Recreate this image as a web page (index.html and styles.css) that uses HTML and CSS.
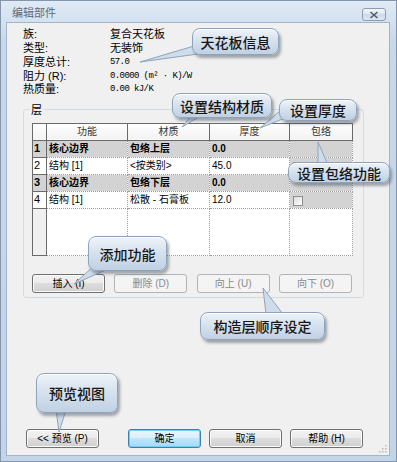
FILE: index.html
```html
<!DOCTYPE html>
<html lang="zh-CN">
<head>
    <meta charset="UTF-8">
    <title>编辑部件</title>
    <link rel="stylesheet" href="styles.css">
</head>
<body>

<div class="window">
    <div class="titlebar">
        <span class="title">编辑部件</span>
        <span class="close">
            <svg width="10" height="8" viewBox="0 0 10 8"><path d="M1.5 1 L8.5 7 M8.5 1 L1.5 7" stroke="#4e5d6f" stroke-width="1.6" fill="none"/></svg>
        </span>
    </div>
    <div class="content">
        <div class="info">
            <span>族:</span><span>复合天花板</span>
            <span>类型:</span><span>无装饰</span>
            <span>厚度总计:</span><span class="num">57.0</span>
            <span>阻力 (R):</span><span class="num">0.0000 (m² · K)/W</span>
            <span>热质量:</span><span class="num">0.00 kJ/K</span>
        </div>

        <fieldset class="layers">
            <legend>层</legend>
            <table class="grid">
                <colgroup>
                    <col class="c-num"><col class="c-fn"><col class="c-mat"><col class="c-thk"><col class="c-wrap">
                </colgroup>
                <tr class="head">
                    <th class="corner"></th><th>功能</th><th>材质</th><th>厚度</th><th>包络</th>
                </tr>
                <tr class="core">
                    <td class="n">1</td><td>核心边界</td><td>包络上层</td><td>0.0</td><td></td>
                </tr>
                <tr>
                    <td class="n">2</td><td>结构 [1]</td><td>&lt;按类别&gt;</td><td>45.0</td><td class="shade"><span class="check"></span></td>
                </tr>
                <tr class="core">
                    <td class="n">3</td><td>核心边界</td><td>包络下层</td><td>0.0</td><td></td>
                </tr>
                <tr>
                    <td class="n">4</td><td>结构 [1]</td><td>松散 - 石膏板</td><td>12.0</td><td class="shade"><span class="check"></span></td>
                </tr>
                <tr class="fill">
                    <td class="n"></td><td></td><td></td><td></td><td></td>
                </tr>
            </table>
            <div class="btn-row">
                <button class="btn">插入 (I)</button>
                <button class="btn" disabled>删除 (D)</button>
                <button class="btn" disabled>向上 (U)</button>
                <button class="btn" disabled>向下 (O)</button>
            </div>
        </fieldset>

        <div class="dialog-buttons">
            <button class="btn preview">&lt;&lt; 预览 (P)</button>
            <button class="btn default">确定</button>
            <button class="btn">取消</button>
            <button class="btn">帮助 (H)</button>
        </div>

        <svg class="grip" width="8" height="8" viewBox="0 0 8 8">
            <rect x="6" y="0" width="1.5" height="1.5" fill="#b3b9c1"/>
            <rect x="3" y="3" width="1.5" height="1.5" fill="#b3b9c1"/>
            <rect x="6" y="3" width="1.5" height="1.5" fill="#b3b9c1"/>
            <rect x="0" y="6" width="1.5" height="1.5" fill="#b3b9c1"/>
            <rect x="3" y="6" width="1.5" height="1.5" fill="#b3b9c1"/>
            <rect x="6" y="6" width="1.5" height="1.5" fill="#b3b9c1"/>
        </svg>
    </div>
</div>

<!-- callout tails, drawn under the bubbles -->
<svg class="tails" width="397" height="462" viewBox="0 0 397 462">
    <g fill="#cfdcea" stroke="#8ea4bd" stroke-width="1">
        <polygon points="194,46 198,54 140,62"/>
        <polygon points="192,115 202,115 182,127"/>
        <polygon points="281,110 285,118 260,128"/>
        <polygon points="318,165 328,165 318,142"/>
        <polygon points="96,264 108,269 74,284"/>
        <polygon points="266,314 283,314 263,288"/>
        <polygon points="56,410 66,410 59,432"/>
    </g>
</svg>

<div class="note ceiling">天花板信息</div>
<div class="note material">设置结构材质</div>
<div class="note thickness">设置厚度</div>
<div class="note wrapping">设置包络功能</div>
<div class="note insert">添加功能</div>
<div class="note order">构造层顺序设定</div>
<div class="note preview-tip">预览视图</div>

</body>
</html>
```

FILE: styles.css
```css
body {
    margin: 0;
    font-family: "Liberation Sans", "Noto Sans CJK SC", sans-serif;
    font-size: 11px;
    color: #000;
}
.window {
    box-sizing: border-box;
    width: 397px;
    height: 462px;
    border: 1px solid #8396ae;
    padding: 0 6px 5px 5px;
    background: linear-gradient(#e0eaf5, #c8d8eb 40px, #c3d4e8);
    display: flex;
    flex-direction: column;
}
.titlebar {
    height: 21px;
    display: flex;
    justify-content: space-between;
}
.title {
    color: #5d6a77;
    font-size: 11px;
    line-height: 14px;
    margin: 5px 0 0 6px;
}
.close {
    box-sizing: border-box;
    width: 24px;
    height: 13px;
    margin: 7px 4px 0 0;
    border: 1px solid #8c9db1;
    border-radius: 3px;
    background: linear-gradient(#f3f7fb, #dbe5f0 50%, #cfdbe8 50%, #dce6f1);
    display: flex;
    align-items: center;
    justify-content: center;
}
.content {
    flex: 1;
    border: 1px solid #a3b5c9;
    background: #f0f0f0;
    display: flex;
    flex-direction: column;
    position: relative;
}
.info {
    margin: 5px 0 0 16px;
    display: grid;
    grid-template-columns: 87px auto;
    grid-auto-rows: 13.75px;
    align-items: center;
    line-height: 13px;
}
.num {
    font-family: "Liberation Mono", monospace;
    font-size: 9px;
    letter-spacing: -0.6px;
}
.layers {
    margin: 6px 25px 0 16px;
    padding: 6px 8px 4px 8px;
    border: 1px solid #d3dbe0;
    border-radius: 3px;
    min-width: 0;
}
.layers legend {
    padding: 0 2px;
    margin-left: -3px;
    font-size: 11px;
    line-height: 14px;
}
.grid {
    width: 320px;
    height: 132px;
    border-collapse: collapse;
    table-layout: fixed;
    font-size: 10px;
    background: #fff;
}
.c-num { width: 14px; }
.c-fn { width: 81px; }
.c-mat { width: 82px; }
.c-thk { width: 80px; }
.c-wrap { width: 63px; }
.grid tr {
    height: 17px;
}
.grid tr.fill {
    height: 47px;
}
.grid th,
.grid td {
    padding: 0 2px;
    border: 1px dotted #9c9c9c;
    white-space: nowrap;
    overflow: hidden;
    text-align: left;
    line-height: 15px;
}
.grid th {
    font-weight: normal;
    text-align: center;
    color: #333;
    border: 1px solid #6a6a6a;
    background: linear-gradient(#ffffff, #f2f2f2);
}
.grid td.n {
    border: 1px solid #6a6a6a;
    background: #fff;
    padding: 0 0 0 1px;
    font-size: 11px;
}
.grid .core td {
    background: #d3d3d3;
    font-weight: bold;
}
.grid td.shade {
    background: #d3d3d3;
}
.grid .fill td.n {
    background: #f0f0f0;
}
.check {
    display: inline-block;
    box-sizing: border-box;
    width: 10px;
    height: 10px;
    margin: 0 0 0 1px;
    border: 1px solid #8e8f8f;
    background: linear-gradient(135deg, #dcdcdc, #ffffff);
    vertical-align: middle;
}
.btn-row {
    width: 320px;
    margin-top: 18px;
    display: flex;
    justify-content: space-between;
}
.btn {
    box-sizing: border-box;
    width: 73px;
    height: 19px;
    padding: 0;
    border: 1px solid #707070;
    border-radius: 3px;
    background: linear-gradient(#f2f2f2, #ebebeb 50%, #dddddd 50%, #cfcfcf);
    box-shadow: inset 0 0 0 1px #fbfbfb;
    font-family: "Liberation Sans", "Noto Sans CJK SC", sans-serif;
    font-size: 10px;
    line-height: 17px;
    color: #000;
}
.btn:disabled {
    border-color: #b0b4b7;
    background: #f4f4f4;
    box-shadow: none;
    color: #8a8a8a;
}
.btn.default {
    border-color: #3c7fb1;
    background: linear-gradient(#eaf6fd, #d9f0fc 50%, #bee6fd 50%, #a7d9f5);
    box-shadow: inset 0 0 0 1px #6fd0f5;
}
.dialog-buttons {
    margin: auto 0 7px 0;
    padding-left: 19px;
    display: flex;
    gap: 8px;
}
.btn.preview {
    margin-right: 21px;
}
.grip {
    position: absolute;
    right: 2px;
    bottom: 2px;
}

/* callouts */
.tails {
    position: absolute;
    left: 0;
    top: 0;
}
.note {
    position: absolute;
    box-sizing: border-box;
    display: flex;
    align-items: center;
    justify-content: center;
    border: 1px solid #8ea4bd;
    border-radius: 8px;
    background: linear-gradient(#eef3f9, #d7e2ee 45%, #c0d1e4);
    box-shadow: 2px 3px 3px rgba(60, 70, 80, 0.45), inset 0 1px 0 #ffffff;
    font-family: "Noto Sans CJK SC", sans-serif;
    font-size: 14px;
    font-weight: 500;
    color: #161616;
    white-space: nowrap;
}
.ceiling { left: 192px; top: 28px; width: 87px; height: 27px; }
.material { left: 172px; top: 93px; width: 100px; height: 25px; }
.thickness { left: 279px; top: 99px; width: 78px; height: 22px; }
.wrapping { left: 288px; top: 162px; width: 102px; height: 21px; }
.insert { left: 88px; top: 236px; width: 79px; height: 35px; }
.order { left: 200px; top: 312px; width: 125px; height: 28px; }
.preview-tip { left: 36px; top: 373px; width: 82px; height: 40px; }
```
